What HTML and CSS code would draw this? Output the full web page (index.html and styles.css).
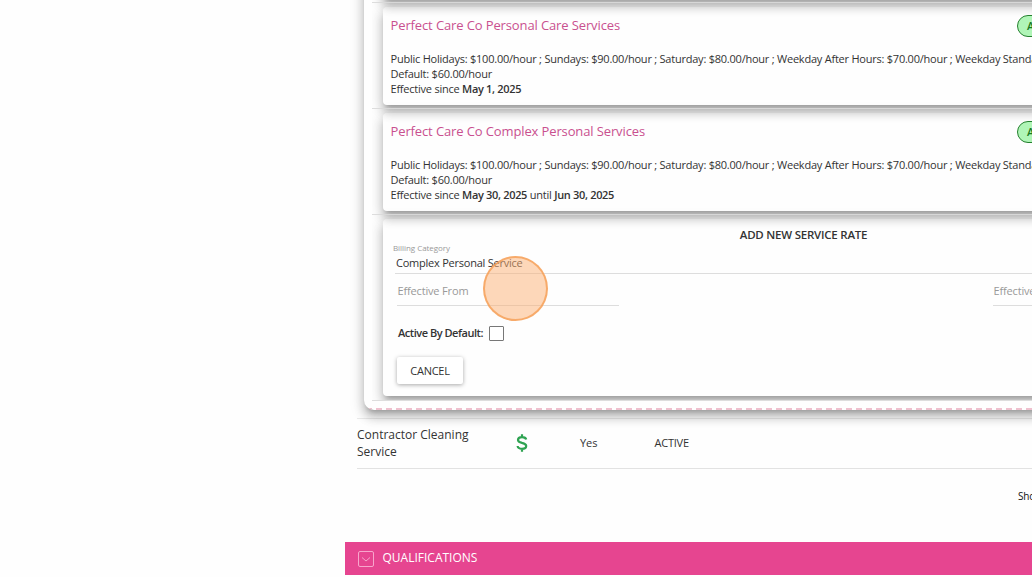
FILE: index.html
```html
<!DOCTYPE html>
<html lang="en">
<head>
<meta charset="utf-8">
<title>Service rates</title>
<link rel="stylesheet" href="styles.css">
</head>
<body>
<main class="page">
  <section class="panel">
    <div class="rows">
    <div class="row row-first"></div>
    <div class="row">
      <article class="card rate">
        <header class="rate-head"><h3 class="rate-title">Perfect Care Co Personal Care Services</h3><span class="badge">ACTIVE</span></header>
        <p class="line rates">Public Holidays: $100.00/hour ; Sundays: $90.00/hour ; Saturday: $80.00/hour ; Weekday After Hours: $70.00/hour ; Weekday Standard</p>
        <p class="line">Default: $60.00/hour</p>
        <p class="line">Effective since <b>May 1, 2025</b></p>
      </article>
    </div>
    <div class="row">
      <article class="card rate">
        <header class="rate-head"><h3 class="rate-title">Perfect Care Co Complex Personal Services</h3><span class="badge">ACTIVE</span></header>
        <p class="line rates">Public Holidays: $100.00/hour ; Sundays: $90.00/hour ; Saturday: $80.00/hour ; Weekday After Hours: $70.00/hour ; Weekday Standard</p>
        <p class="line">Default: $60.00/hour</p>
        <p class="line">Effective since <b>May 30, 2025</b> until <b>Jun 30, 2025</b></p>
      </article>
    </div>
    <div class="row row-form">
      <form class="card form">
        <h3 class="form-title">ADD NEW SERVICE RATE</h3>
        <label class="label">Billing Category</label>
        <div class="select">Complex Personal Service</div>
        <div class="dates"><div class="date">Effective From</div><div class="date">Effective To</div></div>
        <div class="check"><span class="check-label">Active By Default:</span><span class="box"></span></div>
        <button type="button" class="cancel">CANCEL</button>
      </form>
    </div>
    <div class="row row-last"></div>
    </div>
  </section>
  <div class="service">
    <div class="name">Contractor Cleaning Service</div>
    <div class="money"><svg width="12" height="18" viewBox="0 0 12 18" fill="none" stroke="#2fa352" stroke-width="2.2"><path d="M10.2 5.6C9.8 3.9 8.2 3.2 6 3.2C3.6 3.2 2 4.2 2 5.9C2 7.8 3.7 8.3 6 8.9C8.6 9.5 10.2 10.2 10.2 12C10.2 13.8 8.5 14.8 6 14.8C3.4 14.8 1.8 13.8 1.6 12M6 .3V3.4M6 14.6V17.7"/></svg></div>
    <div class="yes">Yes</div>
    <div class="status">ACTIVE</div>
  </div>
  <div class="showing">Showing</div>
  <div class="bar">
    <svg width="16" height="16" viewBox="0 0 16 16" fill="none" stroke="#f7a6cc"><rect x=".5" y=".5" width="15" height="15" rx="1.5"/><path d="M4 6.5L8 10L12 6.5"/></svg>
    <span class="bar-title">QUALIFICATIONS</span>
  </div>
</main>
<div class="pointer"></div>
</body>
</html>
```
FILE: styles.css
```css
:root { --lift: 0 5px 5px -3px rgba(0,0,0,.22), 0 8px 10px 1px rgba(0,0,0,.15), 0 3px 14px 2px rgba(0,0,0,.13); }
* { box-sizing: border-box; }
html { overflow: hidden; }
body { margin: 0; width: 1032px; height: 577px; overflow: hidden; background: #fefefe; font-family: "Open Sans", sans-serif; font-size: 11px; letter-spacing: -.23px; color: #333; position: relative; }
h3, p { margin: 0; font-weight: 400; }
.page { margin-left: 325px; padding-left: 20px; width: 707px; height: 577px; overflow: hidden; }
.panel { margin: -20px 0 0 19px; width: 878px; height: 430px; padding: 0 0 0 8px; border-radius: 0 0 0 10px; background: repeating-linear-gradient(90deg, transparent 0 2px, #efc0ce 2px 8px, transparent 8px 10px) 0 100% / 100% 2px no-repeat; box-shadow: var(--lift); }
.rows { height: 421px; overflow: hidden; }
.row { height: 106px; padding: 4px 0 3px 11px; border-top: 1px solid #ddd; }
.row-first { height: 22px; padding: 0 0 3px 11px; border: 0; }
.row-first::before { content: ""; display: block; height: 19px; border-radius: 0 0 0 4px; box-shadow: var(--lift); }
.row-form { height: 186px; padding-bottom: 4px; }
.row-last { height: 1px; padding: 0; }
.card { height: 100%; border-radius: 4px; box-shadow: var(--lift); }
.rate { padding: 7px 0 0 7.5px; white-space: nowrap; }
.rate-head { display: flex; align-items: center; height: 22px; margin-bottom: 15px; }
.rate-title { width: 626.5px; font-size: 13px; letter-spacing: -.12px; color: #c9508f; }
.badge { height: 22px; margin-top: 1px; padding: 0 9px; border: 1px solid #25812f; border-radius: 11px; background: #b0f5b7; color: #187a20; font-weight: 600; line-height: 20px; }
.line { height: 15px; line-height: 15px; }
.line b { font-weight: 600; letter-spacing: -.32px; }
.form { padding: 8px 0 0 10px; }
.form-title { width: 821px; text-align: center; font-weight: 600; line-height: 16px; font-size: 11.5px; }
.label { display: block; margin-top: -1px; font-size: 8px; letter-spacing: -.05px; line-height: 11px; color: #999; }
.select { height: 21px; margin-left: 2px; padding: 1px; line-height: 17px; border-bottom: 1px solid #ddd; }
.dates { display: flex; gap: 374px; margin-left: 4px; letter-spacing: -.16px; }
.date { flex: none; width: 222px; height: 32px; padding: 8px 0 0 .5px; border-bottom: 1px solid #ddd; line-height: 17px; color: #999; }
.check { display: flex; gap: 6.5px; align-items: center; height: 16px; margin: 18px 0 0 5px; }
.check-label { font-weight: 600; letter-spacing: -.47px; }
.box { width: 15px; height: 15px; margin-top: 2px; border: 1px solid #777; border-radius: 1px; background: #fff; }
.cancel { display: block; width: 66px; height: 27px; margin: 17px 0 0 4px; padding: 0 0 1px; border: 0; border-radius: 2px; background: #fff; font: 11px "Open Sans", sans-serif; letter-spacing: -.25px; color: #333; box-shadow: 0 1px 4px rgba(0,0,0,.34); }
.service { display: flex; align-items: center; width: 866px; height: 51px; margin: 8px 0 0 12px; padding-bottom: 2px; border-top: 1px solid rgba(0,0,0,.08); border-bottom: 1px solid #e2e2e2; }
.name { width: 159px; padding-right: 30px; font-size: 12px; letter-spacing: 0; line-height: 17px; }
.money { width: 64px; height: 18px; }
.yes { width: 74.5px; letter-spacing: -.1px; }
.showing { margin: 18px 0 0 673px; height: 18px; line-height: 18px; font-size: 10px; letter-spacing: -.2px; color: #111; white-space: nowrap; }
.bar { display: flex; align-items: center; gap: 9px; height: 33px; margin-top: 37px; padding-left: 12.5px; background: #e64590; }
.bar-title { margin-top: -2px; color: #fff; font-size: 12px; letter-spacing: 0; }
.pointer { position: absolute; left: 482.5px; top: 255.5px; width: 65px; height: 65px; border: 2px solid rgba(246,160,88,.8); border-radius: 50%; background: rgba(251,176,116,.5); }
```
